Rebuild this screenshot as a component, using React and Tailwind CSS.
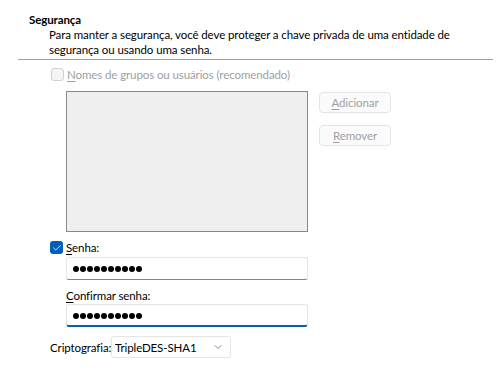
import { ChevronDown, Check } from "lucide-react";

const Dots = () => (
  <div className="flex gap-[1px] pl-[6px]">
    {Array.from({ length: 10 }).map((_, i) => (
      <span key={i} className="h-[6px] w-[6px] rounded-full bg-black" />
    ))}
  </div>
);

const SideButton = ({ first, rest }) => (
  <button
    disabled
    className="h-[21px] w-[72px] rounded-[4px] border border-[#e5e5e5] bg-[#fbfbfb] leading-[15px] text-[#a0a0a0]"
  >
    <span className="underline underline-offset-2">{first}</span>
    {rest}
  </button>
);

export default function App() {
  return (
    <div
      className="h-[376px] w-[504px] overflow-hidden whitespace-nowrap bg-white text-[11.5px] leading-[15px] tracking-[-0.1px] text-black"
      style={{ fontFamily: 'Lato, "Liberation Sans", sans-serif' }}
    >
      <div className="pl-[29px] pt-[12px]">
        <div className="font-bold">Segurança</div>
        <div className="ml-[20px]">
          Para manter a segurança, você deve proteger a chave privada de uma entidade de
          <br />
          segurança ou usando uma senha.
        </div>
      </div>

      <div className="ml-[18px] mt-[2px] h-px w-[475px] bg-[#a0a0a0]" />

      <div className="ml-[51px] mt-[7px] flex items-center gap-[3px] text-[#a0a0a0]">
        <span className="h-[13px] w-[13px] rounded-[3px] border border-[#d0d0d0] bg-[#f5f5f5]" />
        <span>
          <span className="underline underline-offset-2">N</span>omes de grupos ou usuários (recomendado)
        </span>
      </div>

      <div className="ml-[66px] mt-[9px] flex gap-[11px]">
        <div className="h-[141px] w-[242px] border border-[#868a8e] bg-[#efefef]" />
        <div className="mt-[1px] flex flex-col gap-[12px]">
          <SideButton first="A" rest="dicionar" />
          <SideButton first="R" rest="emover" />
        </div>
      </div>

      <div className="ml-[50px] mt-[8px] flex items-center gap-[3px]">
        <span className="flex h-[13px] w-[13px] items-center justify-center rounded-[3px] bg-[#005fb8]">
          <Check size={10} strokeWidth={2} color="white" />
        </span>
        <span>
          <span className="underline underline-offset-2">S</span>enha:
        </span>
      </div>

      <div className="ml-[66px] mt-[2px] flex h-[23px] w-[242px] items-center rounded-[3px] border border-[#e5e5e5] border-b-[#868686] bg-white">
        <Dots />
      </div>

      <div className="ml-[66px] mt-[8px]">
        <span className="underline underline-offset-2">C</span>onfirmar senha:
      </div>

      <div className="ml-[66px] mt-[1px] flex h-[23px] w-[242px] items-center rounded-[3px] border border-b-2 border-[#e5e5e5] border-b-[#005fb8] bg-white pt-[1px]">
        <Dots />
      </div>

      <div className="ml-[50px] mt-[9px] flex items-center gap-[2px]">
        <span className="w-[59px]">Criptografia:</span>
        <div className="flex h-[22px] w-[120px] items-center justify-between rounded-[3px] border border-[#e5e5e5] bg-white pl-[3px] pr-[6px]">
          <span>TripleDES-SHA1</span>
          <ChevronDown size={12} strokeWidth={1.5} color="#606060" />
        </div>
      </div>
    </div>
  );
}
